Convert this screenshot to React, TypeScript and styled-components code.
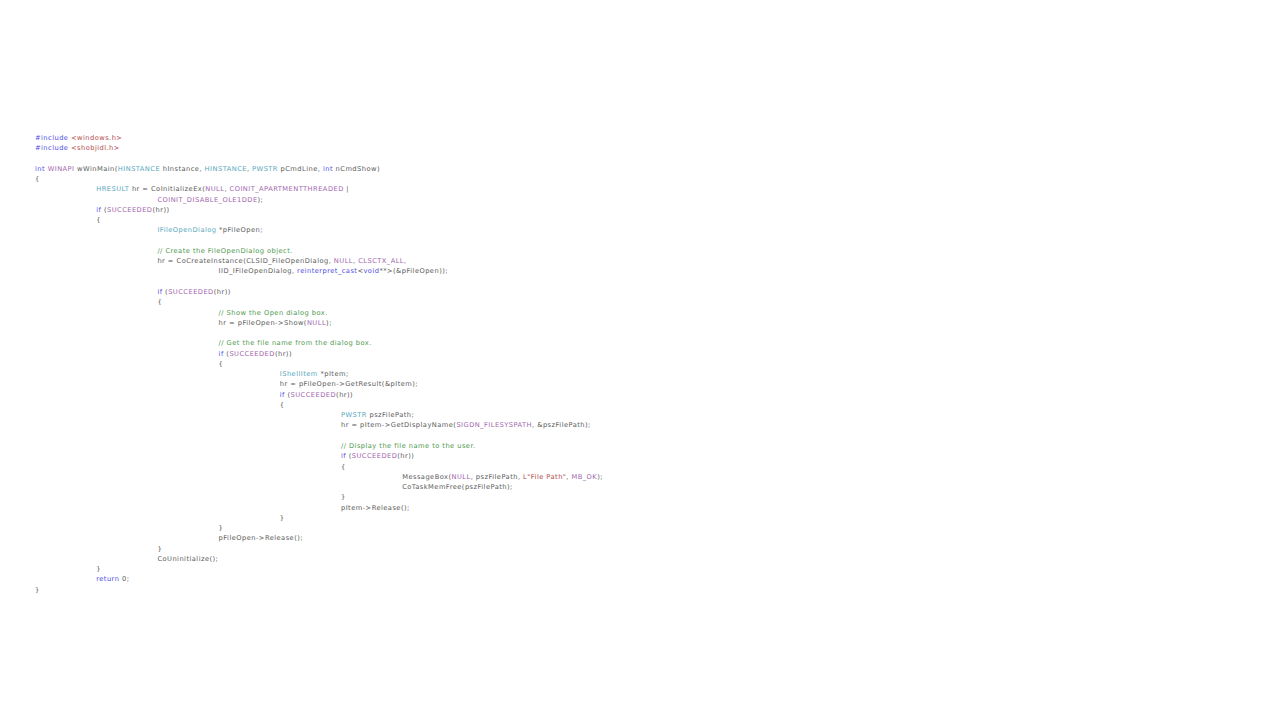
import React from 'react'
import styled, { createGlobalStyle } from 'styled-components'

const code = `#include <windows.h>
#include <shobjidl.h>

int WINAPI wWinMain(HINSTANCE hInstance, HINSTANCE, PWSTR pCmdLine, int nCmdShow)
{
\tHRESULT hr = CoInitializeEx(NULL, COINIT_APARTMENTTHREADED |
\t\tCOINIT_DISABLE_OLE1DDE);
\tif (SUCCEEDED(hr))
\t{
\t\tIFileOpenDialog *pFileOpen;

\t\t// Create the FileOpenDialog object.
\t\thr = CoCreateInstance(CLSID_FileOpenDialog, NULL, CLSCTX_ALL,
\t\t\tIID_IFileOpenDialog, reinterpret_cast<void**>(&pFileOpen));

\t\tif (SUCCEEDED(hr))
\t\t{
\t\t\t// Show the Open dialog box.
\t\t\thr = pFileOpen->Show(NULL);

\t\t\t// Get the file name from the dialog box.
\t\t\tif (SUCCEEDED(hr))
\t\t\t{
\t\t\t\tIShellItem *pItem;
\t\t\t\thr = pFileOpen->GetResult(&pItem);
\t\t\t\tif (SUCCEEDED(hr))
\t\t\t\t{
\t\t\t\t\tPWSTR pszFilePath;
\t\t\t\t\thr = pItem->GetDisplayName(SIGDN_FILESYSPATH, &pszFilePath);

\t\t\t\t\t// Display the file name to the user.
\t\t\t\t\tif (SUCCEEDED(hr))
\t\t\t\t\t{
\t\t\t\t\t\tMessageBox(NULL, pszFilePath, L"File Path", MB_OK);
\t\t\t\t\t\tCoTaskMemFree(pszFilePath);
\t\t\t\t\t}
\t\t\t\t\tpItem->Release();
\t\t\t\t}
\t\t\t}
\t\t\tpFileOpen->Release();
\t\t}
\t\tCoUninitialize();
\t}
\treturn 0;
}`

type Kind = 'kw' | 'type' | 'macro' | 'str' | 'comment' | 'plain'

const colors: Record<Kind, string> = {
  kw: '#2020e0',
  type: '#2b91af',
  macro: '#8a3a9a',
  str: '#a31515',
  comment: '#208020',
  plain: '#303030',
}

const keywords = ['#include', 'int', 'if', 'return', 'reinterpret_cast', 'void']
const types = ['HRESULT', 'IFileOpenDialog', 'IShellItem', 'PWSTR', 'HINSTANCE']
const macros = ['WINAPI', 'NULL', 'COINIT_APARTMENTTHREADED', 'COINIT_DISABLE_OLE1DDE', 'CLSCTX_ALL', 'SUCCEEDED', 'SIGDN_FILESYSPATH', 'MB_OK']

function tokenize(line: string): [Kind, string][] {
  const out: [Kind, string][] = []
  const ci = line.indexOf('//')
  const body = ci >= 0 ? line.slice(0, ci) : line
  const re = /(L"[^"]*"|<[a-z]+\.h>|#include|[A-Za-z_][A-Za-z0-9_]*|[^A-Za-z_#<L]+|.)/g
  let m: RegExpExecArray | null
  while ((m = re.exec(body))) {
    const t = m[0]
    let k: Kind = 'plain'
    if (t.startsWith('L"') || /^<[a-z]+\.h>$/.test(t)) k = 'str'
    else if (keywords.includes(t)) k = 'kw'
    else if (types.includes(t)) k = 'type'
    else if (macros.includes(t)) k = 'macro'
    out.push([k, t])
  }
  if (ci >= 0) out.push(['comment', line.slice(ci)])
  return out
}

const Global = createGlobalStyle`
  body { margin: 0; background: #ffffff; }
`

const Page = styled.div`
  width: 1280px;
  height: 720px;
  padding: 133px 0 0 35px;
  box-sizing: border-box;
`

const Pre = styled.pre`
  margin: 0;
  font-family: "DejaVu Sans", sans-serif;
  font-size: 6.7px;
  letter-spacing: 0.45px;
  line-height: 10.27px;
  tab-size: 61.2px;
  -moz-tab-size: 61.2px;
  white-space: pre;
  color: #303030;
  opacity: 0.8;
`

const Tok = styled.span<{ $kind: Kind }>`
  color: ${({ $kind }) => colors[$kind]};
`

export default function App() {
  return (
    <Page>
      <Global />
      <Pre>
        {code.split('\n').map((line, i) => (
          <div key={i}>
            {line === '' ? '\u00a0' : tokenize(line).map(([k, t], j) => <Tok key={j} $kind={k}>{t}</Tok>)}
          </div>
        ))}
      </Pre>
    </Page>
  )
}
